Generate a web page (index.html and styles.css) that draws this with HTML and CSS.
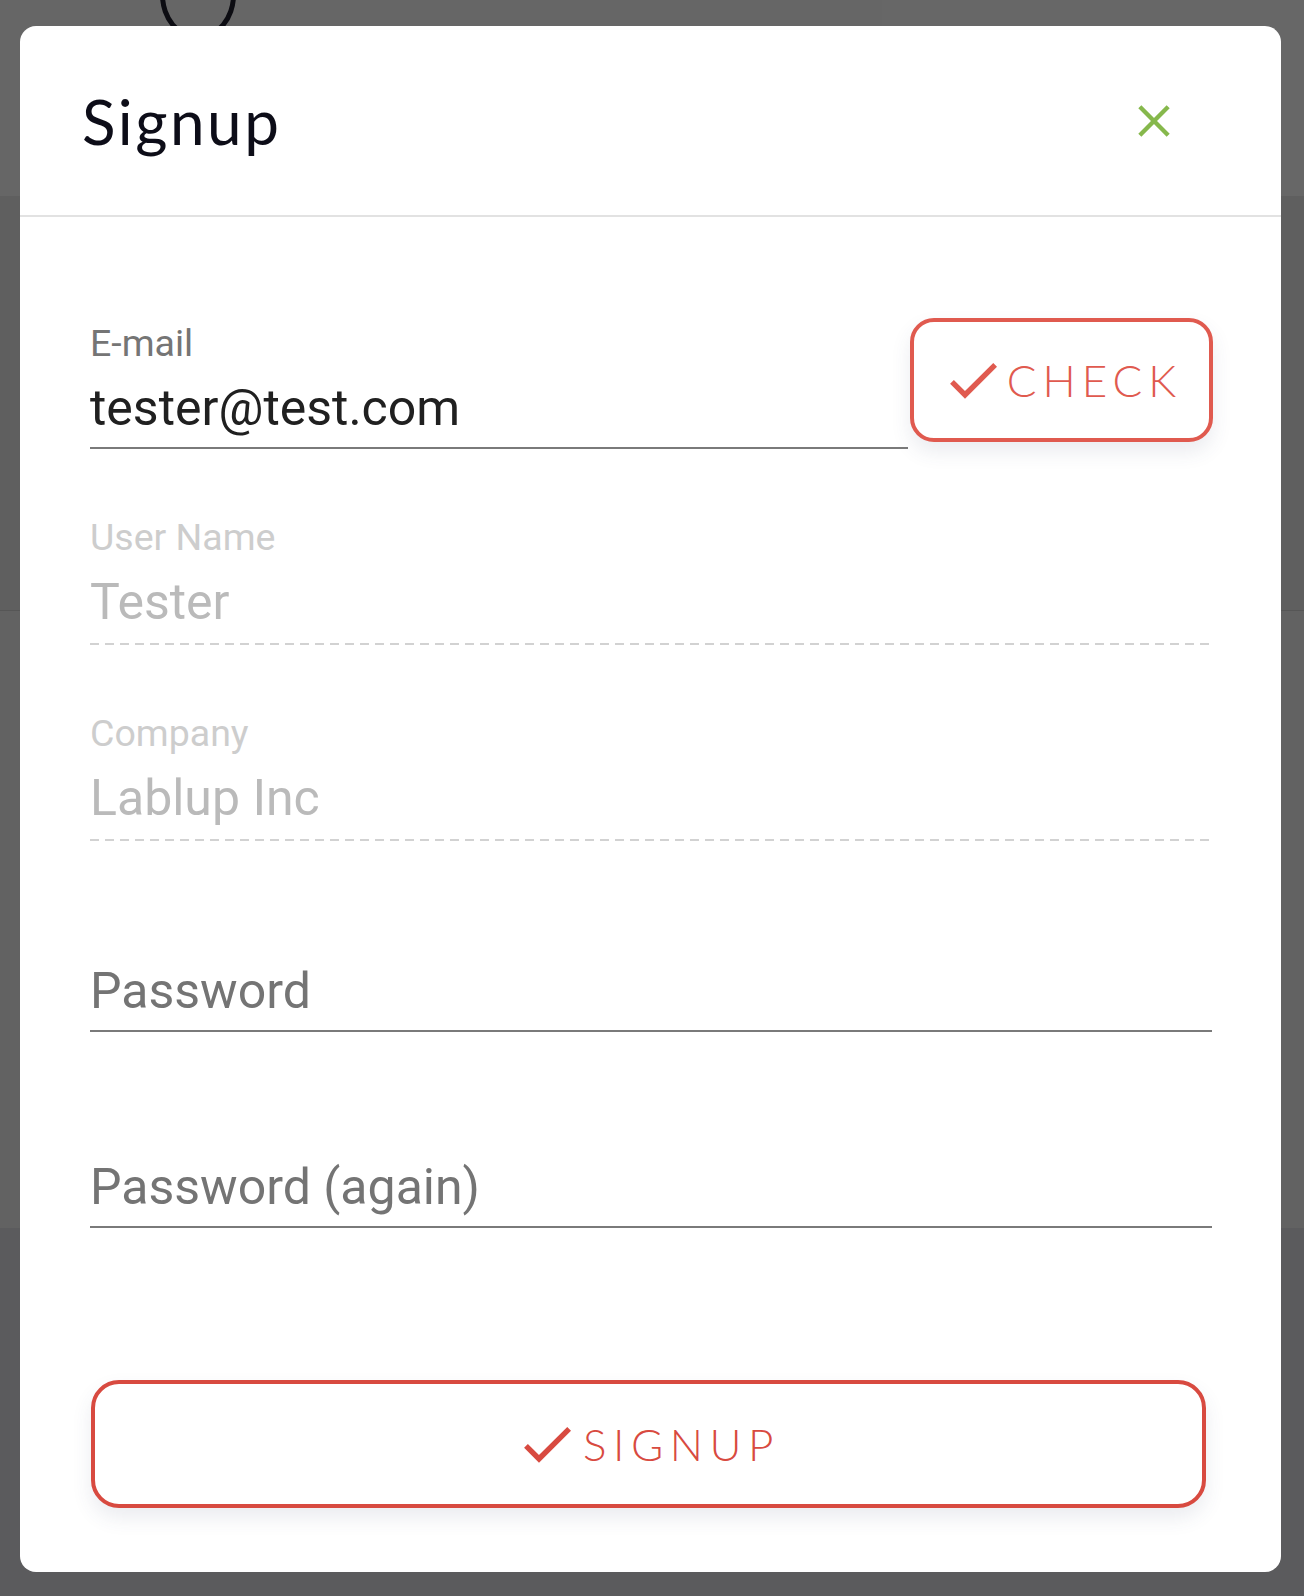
FILE: index.html
```html
<!DOCTYPE html>
<html>
<head>
<meta charset="utf-8">
<title>Signup</title>
<link rel="stylesheet" href="styles.css">
</head>
<body>
<div class="page">
  <div class="band band-top">
    <div class="band-top-left"><span class="ring"></span></div>
    <div class="band-top-right"></div>
  </div>
  <div class="band band-mid1"></div>
  <div class="band band-mid2"></div>
  <div class="band band-bottom"></div>
</div>

<div class="dialog">
  <header class="dialog-header">
    <h1 class="dialog-title">Signup</h1>
    <button class="close-btn" aria-label="close">
      <svg viewBox="0 0 24 24" width="40" height="40"><path d="M3.5 3.5L20.5 20.5M20.5 3.5L3.5 20.5" stroke="#86b84c" stroke-width="2.6" stroke-linecap="butt" fill="none"/></svg>
    </button>
  </header>
  <div class="dialog-body">
    <div class="email-row">
      <div class="field field-email">
        <div class="field-label">E-mail</div>
        <div class="field-value">tester@test.com</div>
      </div>
      <button class="btn btn-check">
        <svg class="check-icon" viewBox="0 0 24 24" width="64" height="64"><path d="M9 16.17L4.83 12l-1.42 1.41L9 19 21 7l-1.41-1.41z" fill="currentColor"/></svg>
        <span class="btn-text">CHECK</span>
      </button>
    </div>

    <div class="field field-disabled">
      <div class="field-label">User Name</div>
      <div class="field-value">Tester</div>
    </div>

    <div class="field field-disabled">
      <div class="field-label">Company</div>
      <div class="field-value">Lablup Inc</div>
    </div>

    <div class="field field-empty field-pw1">
      <div class="field-label"></div>
      <div class="field-value">Password</div>
    </div>

    <div class="field field-empty field-pw2">
      <div class="field-label"></div>
      <div class="field-value">Password (again)</div>
    </div>

    <button class="btn btn-signup">
      <svg class="check-icon" viewBox="0 0 24 24" width="64" height="64"><path d="M9 16.17L4.83 12l-1.42 1.41L9 19 21 7l-1.41-1.41z" fill="currentColor"/></svg>
      <span class="btn-text">SIGNUP</span>
    </button>
  </div>
</div>
</body>
</html>
```

FILE: styles.css
```css
* { box-sizing: border-box; }

html, body {
  margin: 0;
  padding: 0;
}

body {
  width: 1304px;
  height: 1596px;
  overflow: hidden;
  background: #5e5e5f;
  font-family: Roboto, "Liberation Sans", sans-serif;
  position: relative;
}

/* underlying page behind the scrim */
.page {
  display: flex;
  flex-direction: column;
}

.band-top {
  height: 196px;
  display: flex;
}

.band-top-left {
  position: relative;
  width: 882px;
  background: #666666;
}

.band-top-right {
  flex: 1;
  background: #676767;
}

.ring {
  position: absolute;
  left: 160px;
  top: -50px;
  width: 76px;
  height: 90px;
  border: 5px solid #0c0c12;
  border-radius: 50%;
}

.band-mid1 {
  height: 415px;
  background: #5f5f5f;
  border-bottom: 1px solid #565656;
}

.band-mid2 {
  height: 617px;
  background: #626262;
}

.band-bottom {
  height: 368px;
  background: #5b5b5d;
}

/* dialog */
.dialog {
  position: absolute;
  left: 20px;
  top: 26px;
  width: 1261px;
  height: 1546px;
  background: #ffffff;
  border-radius: 16px;
  display: flex;
  flex-direction: column;
}

.dialog-header {
  height: 191px;
  border-bottom: 2px solid #e2e2e2;
  display: flex;
  align-items: center;
  justify-content: space-between;
  padding: 0 107px 0 62px;
}

.dialog-title {
  margin: 0;
  font-family: Lato, "Open Sans", sans-serif;
  font-weight: 400;
  font-size: 62px;
  line-height: 70px;
  color: #0d0d18;
  letter-spacing: 2.5px;
}

.close-btn {
  border: 0;
  padding: 0;
  background: none;
  width: 40px;
  height: 40px;
  display: flex;
}

.dialog-body {
  padding: 101px 69px 0 70px;
  display: flex;
  flex-direction: column;
}

.email-row {
  display: flex;
  align-items: flex-start;
}

.field {
  margin-top: 66px;
  padding-bottom: 9px;
  border-bottom: 2px solid #7a7a7a;
}

.field-email {
  margin-top: 3px;
  width: 818px;
  flex: none;
}

.field-label {
  height: 44px;
  font-size: 37.5px;
  line-height: 44px;
  color: #757575;
  white-space: nowrap;
}

.field-value {
  margin-top: 13px;
  font-size: 50px;
  line-height: 60px;
  color: #202020;
  white-space: nowrap;
}

.field-disabled {
  border-bottom: 0;
  padding-bottom: 13px;
  background-image: repeating-linear-gradient(to right, #d2d2d2 0, #d2d2d2 9px, transparent 9px, transparent 15px);
  background-size: 100% 2px;
  background-position: left bottom;
  background-repeat: no-repeat;
}

.field-disabled .field-label { color: #cdcdcd; }
.field-disabled .field-value { color: #bababa; }

.field-empty .field-value { color: #747474; }

.field-pw1 { margin-top: 63px; }
.field-pw2 { margin-top: 68px; }

/* buttons */
.btn {
  font-family: Lato, "Open Sans", sans-serif;
  background: #ffffff;
  color: #e05a4f;
  border: 4px solid #e05a4f;
  border-radius: 24px;
  display: flex;
  align-items: center;
  justify-content: center;
  padding: 0;
  box-shadow: 0 10px 20px rgba(60, 70, 110, 0.10);
}

.btn-check {
  margin-left: 2px;
  width: 303px;
  height: 124px;
  flex: none;
  padding-left: 2px;
}

.check-icon {
  flex: none;
  margin-left: -8px;
  margin-right: 2px;
}

.btn-text {
  font-size: 44px;
  font-weight: 300;
  letter-spacing: 6px;
  line-height: 1;
  margin-right: -6px;
}

.btn-signup {
  margin-top: 152px;
  margin-left: 1px;
  width: 1115px;
  height: 128px;
  border-color: #d84a40;
  color: #d84a40;
  border-radius: 28px;
}

.btn-signup .btn-text {
  letter-spacing: 6.5px;
}

.btn-signup .check-icon {
  margin-right: 4px;
}
```
